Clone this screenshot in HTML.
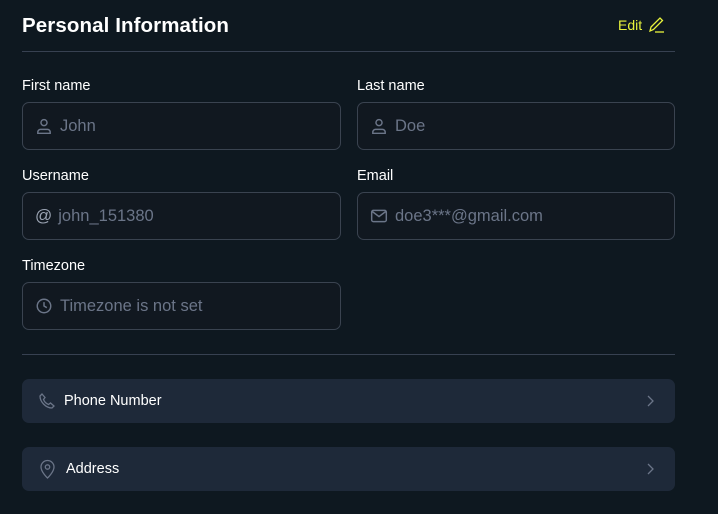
<!DOCTYPE html><html><head><style>
*{box-sizing:border-box;margin:0;padding:0}
body{width:718px;height:514px;background:#0e1820;font-family:"Liberation Sans",sans-serif;position:relative;overflow:hidden}
.a{position:absolute}
.t{left:22px;top:14px;font-size:20.5px;color:#fff;font-weight:bold;letter-spacing:0.1px}
.hr{left:22px;width:653px;height:1px;background:#374151}
.lab{font-size:14.5px;color:#fff;top:0}
.in{height:48px;border:1px solid #3a4350;border-radius:7px;background:#111820;color:#6b7588;font-size:16.5px;display:flex;align-items:center;padding-left:12px}
.in svg{margin-right:7px;flex:none}
.row{left:22px;width:653px;height:44px;background:#1e2939;border-radius:7px;display:flex;align-items:center;color:#fff;font-size:14.5px}
</style></head><body>
<div class="a t">Personal Information</div>
<div class="a" style="left:618px;top:17px;color:#e8f43c;font-size:14px">Edit</div>
<svg class="a" style="left:647px;top:16px" width="20" height="18" viewBox="0 0 20 18" fill="none" stroke="#e8f43c" stroke-width="1.3"><path d="M3 15 L4 11 L13 2 L15.5 4.5 L6.5 13.5 Z"/><path d="M8 16H17"/></svg>
<div class="a hr" style="top:51px"></div>
<div class="a lab" style="left:22px;top:78px">First name</div>
<div class="a lab" style="left:357px;top:78px">Last name</div>
<div class="a in" style="left:22px;top:102px;width:319px"><svg width="18" height="18" viewBox="0 0 16 16" fill="none" stroke="#6b7588" stroke-width="1.3"><circle cx="8" cy="5" r="2.7"/><path d="M2.5 14.5v-1a2.5 2.5 0 0 1 2.5-2.5h6a2.5 2.5 0 0 1 2.5 2.5v1z"/></svg>John</div>
<div class="a in" style="left:357px;top:102px;width:318px"><svg width="18" height="18" viewBox="0 0 16 16" fill="none" stroke="#6b7588" stroke-width="1.3"><circle cx="8" cy="5" r="2.7"/><path d="M2.5 14.5v-1a2.5 2.5 0 0 1 2.5-2.5h6a2.5 2.5 0 0 1 2.5 2.5v1z"/></svg>Doe</div>
<div class="a lab" style="left:22px;top:168px">Username</div>
<div class="a lab" style="left:357px;top:168px">Email</div>
<div class="a in" style="left:22px;top:192px;width:319px"><span style="color:#9aa3b2;margin-right:6px;font-size:17px">@</span>john_151380</div>
<div class="a in" style="left:357px;top:192px;width:318px"><svg width="18" height="18" viewBox="0 0 16 16" fill="none" stroke="#6b7588" stroke-width="1.3"><rect x="1.5" y="3" width="13" height="10" rx="1.5"/><path d="M2 4l6 4.5L14 4"/></svg>doe3***@gmail.com</div>
<div class="a lab" style="left:22px;top:258px">Timezone</div>
<div class="a in" style="left:22px;top:282px;width:319px"><svg width="18" height="18" viewBox="0 0 16 16" fill="none" stroke="#6b7588" stroke-width="1.3"><circle cx="8" cy="8" r="6"/><path d="M8 4.5V8l2.5 1.5"/></svg>Timezone is not set</div>
<div class="a hr" style="top:354px"></div>
<div class="a row" style="top:379px"><svg style="margin:0 8px 0 16px" width="18" height="18" viewBox="0 0 18 18" fill="none" stroke="#6b7588" stroke-width="1.3"><path d="M4 2l3 3.5-1.5 2a9 9 0 0 0 5 5l2-1.5L16 14l-2 2C8 16 2 10 2 4z"/></svg>Phone Number<svg style="margin-left:auto;margin-right:21px" width="8" height="12" viewBox="0 0 8 12" fill="none" stroke="#6b7588" stroke-width="1.3"><path d="M2 1l5 5-5 5"/></svg></div>
<div class="a row" style="top:447px"><svg style="margin:0 10px 0 17px" width="17" height="20" viewBox="0 0 17 20" fill="none" stroke="#6b7588" stroke-width="1.3"><path d="M8.5 19s-6.5-6-6.5-11a6.5 6.5 0 0 1 13 0c0 5-6.5 11-6.5 11z"/><circle cx="8.5" cy="8" r="2.2"/></svg>Address<svg style="margin-left:auto;margin-right:21px" width="8" height="12" viewBox="0 0 8 12" fill="none" stroke="#6b7588" stroke-width="1.3"><path d="M2 1l5 5-5 5"/></svg></div>
</body></html>
